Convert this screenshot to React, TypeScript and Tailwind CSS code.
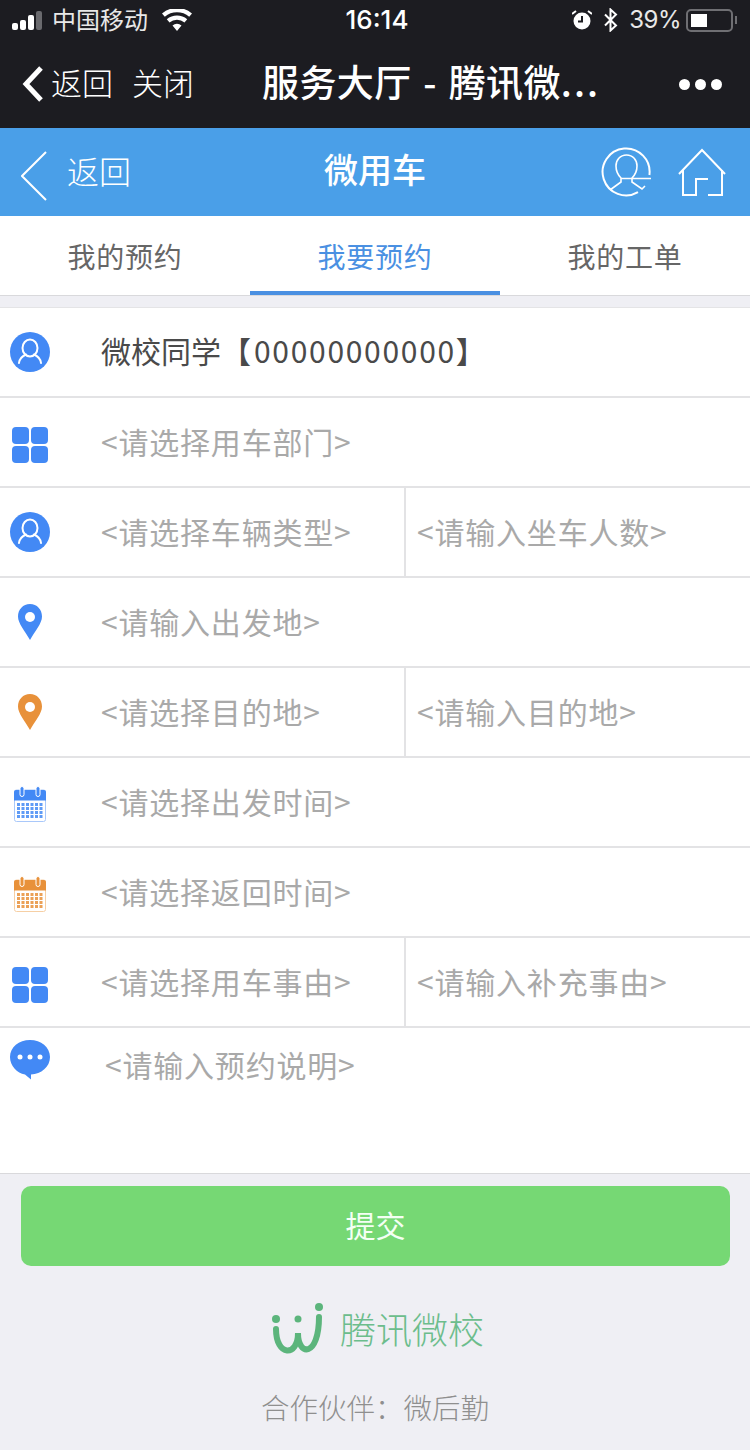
import React from 'react';

const CJK = "font-['Noto_Sans_CJK_SC','Liberation_Sans',sans-serif]";

const PersonIcon = () => (
  <svg width="40" height="40" viewBox="0 0 40 40">
    <circle cx="20" cy="20" r="20" fill="#4389f5" />
    <ellipse cx="20" cy="16" rx="7.500" ry="8.500" fill="none" stroke="#fff" strokeWidth="2" />
    <path d="M9 31c.5-4.500 3.500-7 7-8.500M31 31c-.5-4.500-3.500-7-7-8.500" fill="none" stroke="#fff" strokeWidth="2" strokeLinecap="round" />
  </svg>
);

const GridIcon = () => (
  <svg className="mt-[6px]" width="36" height="36" viewBox="0 0 36 36" fill="#4389f5">
    <rect x="0" y="0" width="17" height="17" rx="4" />
    <rect x="19" y="0" width="17" height="17" rx="4" />
    <rect x="0" y="19" width="17" height="17" rx="4" />
    <rect x="19" y="19" width="17" height="17" rx="4" />
  </svg>
);

const PinIcon = ({ color }: { color: string }) => (
  <svg width="24" height="36" viewBox="0 0 24 36">
    <path d="M12 0C5 0 0 5.500 0 12.500c0 7 7 14.500 12 23.500 5-9 12-16.500 12-23.500C24 5.500 19 0 12 0z" fill={color} />
    <circle cx="12" cy="13" r="5" fill="#fff" />
  </svg>
);

const CalendarIcon = ({ color, light }: { color: string; light: string }) => {
  const cells: React.ReactNode[] = [];
  for (let r = 0; r < 4; r++) {
    for (let c = 0; c < 6; c++) {
      cells.push(<rect key={`${r}-${c}`} x={3 + c * 4.500} y={17 + r * 4} width="3" height="3" fill={color} opacity="0.85" />);
    }
  }
  return (
    <svg className="mt-[4px]" width="32" height="36" viewBox="0 0 32 36">
      <rect x="0.500" y="4" width="31" height="31.500" rx="2" fill="#fff" stroke={light} />
      <path d="M0 14.500V6a2 2 0 0 1 2-2h28a2 2 0 0 1 2 2v8.500z" fill={color} />
      <rect x="6" y="0.500" width="4" height="10" rx="2" fill={color} stroke="#fff" strokeWidth="1" />
      <rect x="22" y="0.500" width="4" height="10" rx="2" fill={color} stroke="#fff" strokeWidth="1" />
      {cells}
    </svg>
  );
};

const ChatIcon = () => (
  <svg width="40" height="40" viewBox="0 0 40 40">
    <path d="M20 0C9 0 0 7 0 17c0 9 7 16 15 17.500l6 5v-5C31 34 40 27 40 17 40 7 31 0 20 0z" fill="#4389f5" />
    <circle cx="10" cy="17" r="2.500" fill="#fff" />
    <circle cx="20" cy="17" r="2.500" fill="#fff" />
    <circle cx="30" cy="17" r="2.500" fill="#fff" />
  </svg>
);

const Row = ({
  icon,
  text,
  right,
}: {
  icon: React.ReactNode;
  text: string;
  right?: string;
}) => (
  <div className="flex h-[90px] border-b-2 border-[#e3e3e5] bg-white">
    <div className="flex w-[60px] shrink-0 items-center justify-center">{icon}</div>
    <div className="flex flex-1 items-center pb-[2px] pl-[41px] text-[30px] tracking-[0.8px] text-[#a9a9a9]">{text}</div>
    {right && (
      <div className="flex w-[346px] shrink-0 items-center border-l-2 border-[#e3e3e5] pb-[2px] pl-[11px] text-[30px] tracking-[0.8px] text-[#a9a9a9]">
        {right}
      </div>
    )}
  </div>
);

export default function App() {
  return (
    <div className={`flex h-[1450px] w-[750px] flex-col overflow-hidden bg-[#efeff4] ${CJK}`}>
      {/* system bars */}
      <div className="h-[128px] bg-[#1c1c21] text-white">
        <div className="flex h-[40px] items-center justify-between pl-3 pr-[13px] text-[#e8e8e8]">
          <div className="flex w-[240px] items-center">
            <div className="flex items-end gap-[2px]">
              <span className="h-[7px] w-[6px] rounded-[2px] bg-white" />
              <span className="h-[10px] w-[6px] rounded-[2px] bg-white" />
              <span className="h-[15px] w-[6px] rounded-[2px] bg-white" />
              <span className="h-[19px] w-[6px] rounded-[2px] bg-[#6a6a6e]" />
            </div>
            <span className="mb-[3px] ml-[10px] text-[24px] leading-none">中国移动</span>
            <svg className="ml-[14px]" width="30" height="22" viewBox="0 0 30 22" fill="#fff">
              <path d="M15 22l-4.500-5.500a7 7 0 0 1 9 0zM7.500 13.500L4.800 10.200a16 16 0 0 1 20.400 0l-2.700 3.300a11.500 11.500 0 0 0-15 0zM2.800 7.800L0 4.500a23 23 0 0 1 30 0l-2.800 3.300a19 19 0 0 0-24.400 0z" />
            </svg>
          </div>
          <span className="ml-[5px] font-['Inter',sans-serif] text-[26px] font-medium leading-none text-white">16:14</span>
          <div className="flex w-[240px] items-center justify-end">
            <svg width="20" height="20" viewBox="0 0 20 20" fill="#fff">
              <circle cx="10" cy="11" r="8.500" />
              <path d="M10 6v5.500H6" fill="none" stroke="#1c1c21" strokeWidth="2" />
              <path d="M0 4l4-3M20 4l-4-3" stroke="#fff" strokeWidth="2" />
            </svg>
            <svg className="ml-[11px]" width="16" height="24" viewBox="0 0 16 24" fill="none" stroke="#fff" strokeWidth="2">
              <path d="M2 6.500l11 11-5.500 5V1.500l5.500 5-11 11" />
            </svg>
            <span className="ml-[10px] font-['Inter',sans-serif] text-[24px] font-normal leading-none tracking-[-0.5px]">39%</span>
            <div className="ml-[5px] h-[23px] w-[47px] rounded-[5px] border-2 border-[#6f6f73] p-[3px]">
              <div className="h-full w-[16px] bg-white" />
            </div>
            <span className="ml-[2px] h-[8px] w-[2px] bg-[#6f6f73]" />
          </div>
        </div>
        <div className="flex h-[88px] items-center pl-[22px] pr-[28px]">
          <svg width="22" height="36" viewBox="0 0 22 36" fill="none" stroke="#fff" strokeWidth="5">
            <path d="M19 2L4 18l15 16" />
          </svg>
          <span className="mb-[4px] ml-[7px] text-[31px] font-light">返回</span>
          <span className="mb-[4px] ml-[19px] text-[31px] font-light">关闭</span>
          <span className="mb-[4px] ml-[68px] text-[37px] font-medium tracking-[0.4px] [word-spacing:3px]">
            服务大厅 - 腾讯微<span className="tracking-[2px]">...</span>
          </span>
          <div className="ml-auto flex gap-[5px]">
            <span className="h-[11px] w-[11px] rounded-full bg-white" />
            <span className="h-[11px] w-[11px] rounded-full bg-white" />
            <span className="h-[11px] w-[11px] rounded-full bg-white" />
          </div>
        </div>
      </div>

      {/* header */}
      <div className="relative flex h-[88px] items-center bg-[#4a9fe8] pl-[21px] text-white">
        <svg className="mt-[8px]" width="26" height="50" viewBox="0 0 26 50" fill="none" stroke="#fff" strokeWidth="2">
          <path d="M25 1L1 25l24 24" />
        </svg>
        <span className="mb-[4px] ml-[20px] text-[32px] font-light">返回</span>
        <span className="absolute left-0 right-0 top-[16px] text-center text-[34px] font-medium leading-[50px]">微用车</span>
        <div className="ml-auto flex items-center pr-[24px]">
          <svg className="mb-[1px]" width="50" height="50" viewBox="0 0 50 50" fill="none" stroke="#fff" strokeWidth="2">
            <path d="M37 45.200A23.500 23.500 0 1 1 48.400 28" />
            <path
              d="M9 43l11-8v-4c-3-3-5-7-5-12 0-6 4-11 10.500-11S36 13 36 19c0 5-2 9-5 12v4l10 7 3-3M20 31.500h31"
              strokeWidth="1.600"
            />
          </svg>
          <svg className="ml-[27px]" width="48" height="48" viewBox="0 0 48 48" fill="none" stroke="#fff" strokeWidth="2">
            <path d="M1 26L24 2l23 24M5 22v25h13V31h12M30 47h14V22" />
          </svg>
        </div>
      </div>

      {/* tabs */}
      <div className="flex h-[80px] border-b border-[#d9d9dc] bg-white pt-[4px] text-[28px] tracking-[0.8px] text-[#666]">
        <div className="flex w-[250px] items-center justify-center border-b-[4px] border-transparent">我的预约</div>
        <div className="flex w-[250px] items-center justify-center border-b-[4px] border-[#4a90e2] text-[#4a90e2]">我要预约</div>
        <div className="flex w-[250px] items-center justify-center border-b-[4px] border-transparent">我的工单</div>
      </div>

      <div className="h-[12px] border-b border-[#e4e4e6]" />

      {/* form */}
      <div className="flex h-[90px] border-b-2 border-[#e3e3e5] bg-white">
        <div className="flex w-[60px] shrink-0 items-center justify-center">
          <PersonIcon />
        </div>
        <div className="flex flex-1 items-center pb-[4px] pl-[41px] text-[30px] text-[#4a4a4a]">
          微校同学【<span className="ml-[3px] tracking-[1.700px]">00000000000</span>】
        </div>
      </div>
      <Row icon={<GridIcon />} text="<请选择用车部门>" />
      <Row icon={<PersonIcon />} text="<请选择车辆类型>" right="<请输入坐车人数>" />
      <Row icon={<PinIcon color="#4389f5" />} text="<请输入出发地>" />
      <Row icon={<PinIcon color="#e8913a" />} text="<请选择目的地>" right="<请输入目的地>" />
      <Row icon={<CalendarIcon color="#4389f5" light="#a9c8fa" />} text="<请选择出发时间>" />
      <Row icon={<CalendarIcon color="#e8913a" light="#f6cfa4" />} text="<请选择返回时间>" />
      <Row icon={<GridIcon />} text="<请选择用车事由>" right="<请输入补充事由>" />
      <div className="flex h-[146px] border-b border-[#d9d9dc] bg-white">
        <div className="flex w-[60px] shrink-0 justify-center pt-[12px]">
          <ChatIcon />
        </div>
        <div className="pl-[45px] pt-[14px] text-[30px] tracking-[0.8px] text-[#a9a9a9]">&lt;请输入预约说明&gt;</div>
      </div>

      {/* submit */}
      <div className="px-[21px] pt-[12px]">
        <div className="flex h-[80px] w-[709px] items-center justify-center rounded-[10px] bg-[#76d874] pb-[3px] text-[30px] text-[#f4fff4]">
          提交
        </div>
      </div>

      {/* footer */}
      <div className="mt-[36px] flex items-center justify-center pl-[5px]">
        <svg width="54" height="52" viewBox="0 0 54 52" fill="none">
          <circle cx="5" cy="17" r="4" fill="#5cb57c" />
          <circle cx="27" cy="17" r="3.500" fill="#5cb57c" />
          <circle cx="48" cy="5" r="4" fill="#5cb57c" />
          <path d="M5 27c0 28 22 28 22 4 0 24 21 24 21-16" stroke="#5cb57c" strokeWidth="6" strokeLinecap="round" />
        </svg>
        <span className="ml-[15px] text-[36px] font-light leading-none text-[#6cbd8c]">腾讯微校</span>
      </div>
      <div className="mt-[32px] text-center text-[28.500px] font-light text-[#8f8f8f]">合作伙伴：微后勤</div>
    </div>
  );
}
